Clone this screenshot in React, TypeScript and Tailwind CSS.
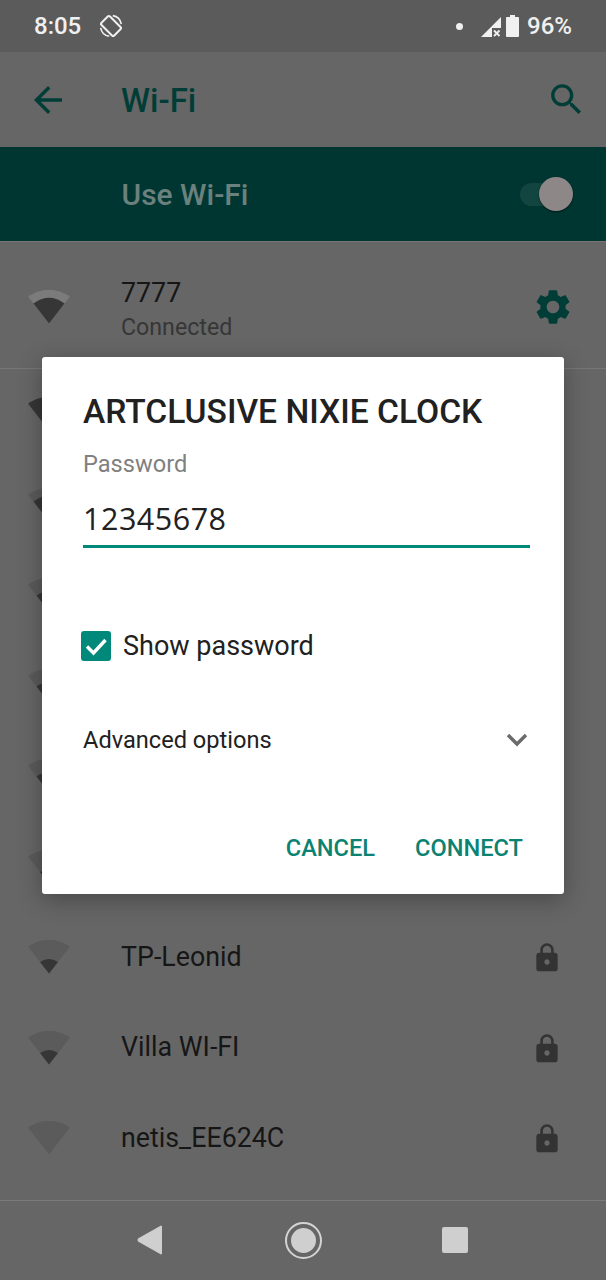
const LOCK =
  'M18 8h-1V6c0-2.76-2.24-5-5-5S7 3.24 7 6v2H6c-1.1 0-2 .9-2 2v10c0 1.1.9 2 2 2h12c1.1 0 2-.9 2-2V10c0-1.1-.9-2-2-2zm-6 9c-1.1 0-2-.9-2-2s.9-2 2-2 2 .9 2 2-.9 2-2 2zm3.1-9H8.9V6c0-1.71 1.39-3.1 3.1-3.1 1.71 0 3.1 1.39 3.1 3.1v2z';
const GEAR =
  'M19.14 12.94c.04-.3.06-.61.06-.94 0-.32-.02-.64-.07-.94l2.03-1.58c.18-.14.23-.41.12-.61l-1.92-3.32c-.12-.22-.37-.29-.59-.22l-2.39.96c-.5-.38-1.03-.7-1.62-.94l-.36-2.54c-.04-.24-.24-.41-.48-.41h-3.84c-.24 0-.43.17-.47.41l-.36 2.54c-.59.24-1.13.57-1.62.94l-2.39-.96c-.22-.08-.47 0-.59.22L2.74 8.87c-.12.21-.08.47.12.61l2.03 1.58c-.05.3-.09.63-.09.94s.02.64.07.94l-2.03 1.58c-.18.14-.23.41-.12.61l1.92 3.32c.12.22.37.29.59.22l2.39-.96c.5.38 1.03.7 1.62.94l.36 2.54c.05.24.24.41.48.41h3.84c.24 0 .44-.17.47-.41l.36-2.54c.59-.24 1.13-.56 1.62-.94l2.39.96c.22.08.47 0 .59-.22l1.92-3.32c.12-.22.07-.47-.12-.61l-2.01-1.58zM12 15.6c-1.98 0-3.6-1.62-3.6-3.6s1.62-3.6 3.6-3.6 3.6 1.62 3.6 3.6-1.62 3.6-3.6 3.6z';

const FAN = 'M1 5.8Q21 -6.5 41 5.8Q42 6.5 41.2 7.6L21 33.5L.8 7.6Q0 6.5 1 5.8Z';
const FAN_LEVELS: Record<number, string> = {
  1: 'M12 22Q21 16 30 22L21 33.5Z',
  2: 'M8.5 17.4Q21 9 33.5 17.4L21 33.5Z',
  3: 'M5.5 13.5Q21 2 36.5 13.5L21 33.5Z',
  4: FAN,
};

// level 0-4, the dark part of the fan grows from the tip
function WifiIcon({ level, connected }: { level: number; connected?: boolean }) {
  return (
    <svg width="42" height="34" viewBox="0 0 42 34" className="shrink-0">
      <path d={FAN} fill={connected ? '#7b7b7b' : '#5b5b5b'} />
      {FAN_LEVELS[level] && <path d={FAN_LEVELS[level]} fill="#363636" />}
    </svg>
  );
}

function NetworkRow({ name, level }: { name?: string; level: number }) {
  return (
    <div className="flex h-[90.5px] items-center pl-[28px] pr-[43px]">
      <WifiIcon level={level} />
      <span className="ml-[51px] flex-1 text-[26.8px] leading-none text-[#161616]">{name}</span>
      <svg width="32" height="32" viewBox="0 0 24 24" fill="#333333" className="mt-[2px]">
        <path d={LOCK} />
      </svg>
    </div>
  );
}

// these rows sit behind the dialog, only the icon edge shows
const hiddenLevels = [4, 3, 2, 2, 2, 1];

export default function App() {
  return (
    <div className="relative flex h-[1280px] w-[606px] flex-col overflow-hidden bg-[#666666] font-['Roboto',sans-serif]">
      {/* Status bar */}
      <div className="flex h-[52px] items-center bg-[#5b5b5b] pl-[34px] pr-[34px] text-[#f0f0f0]">
        <span className="text-[24px] font-medium leading-none">8:05</span>
        <svg width="24" height="24" viewBox="0 0 24 24" className="ml-[18px]" fill="none" stroke="#f0f0f0">
          <rect x="6" y="3" width="12" height="18" rx="1.6" strokeWidth="2" transform="rotate(-45 12 12)" />
          <path d="M13.8 1.66A10.5 10.5 0 0 1 22.3 10.2M10.2 22.3A10.5 10.5 0 0 1 1.66 13.8" strokeWidth="1.6" />
        </svg>
        <div className="flex-1" />
        <div className="h-[7px] w-[7px] rounded-full bg-[#f0f0f0]" />
        <svg width="20" height="20" viewBox="0 0 20 20" className="ml-[18px] mt-[1px]">
          <path d="M20 0V11H11V20H0Z" fill="#f0f0f0" />
          <path d="M13 13.5L18.5 19M18.5 13.5L13 19" stroke="#f0f0f0" strokeWidth="1.8" />
        </svg>
        <svg width="13" height="22" viewBox="0 0 13 22" className="ml-[5px]" fill="#f0f0f0">
          <path d="M4 0H9V2H12A1 1 0 0 1 13 3V21A1 1 0 0 1 12 22H1A1 1 0 0 1 0 21V3A1 1 0 0 1 1 2H4Z" />
        </svg>
        <span className="ml-[8px] text-[24px] font-medium leading-none">96%</span>
      </div>

      {/* App bar */}
      <div className="flex h-[95px] items-center pl-[27px] pr-[19px]">
        <svg width="42" height="42" viewBox="0 0 24 24" fill="#003d37">
          <path d="M20 11H7.83l5.59-5.59L12 4l-8 8 8 8 1.41-1.41L7.83 13H20v-2z" />
        </svg>
        <span className="ml-[52px] mt-[2px] flex-1 text-[33px] font-medium leading-none text-[#003d37]">Wi-Fi</span>
        <svg width="41" height="41" viewBox="0 0 24 24" fill="#003d37">
          <path d="M15.5 14h-.79l-.28-.27C15.41 12.59 16 11.11 16 9.5 16 5.91 13.09 3 9.5 3S3 5.91 3 9.5 5.91 16 9.5 16c1.61 0 3.09-.59 4.23-1.57l.27.28v.79l5 4.99L20.49 19l-4.99-5zm-6 0C7.01 14 5 11.99 5 9.5S7.01 5 9.5 5 14 7.01 14 9.5 11.99 14 9.5 14z" />
        </svg>
      </div>

      {/* Use Wi-Fi */}
      <div className="flex h-[94px] items-center bg-[#003631] pl-[121.5px] pr-[33px]">
        <span className="mt-[2px] flex-1 text-[30px] font-medium leading-none text-[#6a817d]">Use Wi-Fi</span>
        <div className="relative h-[23px] w-[53px] rounded-full bg-[#124540]">
          <div className="absolute right-0 top-[-5.5px] h-[34px] w-[34px] rounded-full bg-[#8d8887] shadow-[0_1px_2px_rgba(0,0,0,0.5)]" />
        </div>
      </div>

      {/* Networks */}
      <div className="flex-1 border-t border-[#767676]">
        <div className="flex h-[127px] items-center border-b border-[#767676] pl-[28px] pr-[32px] pt-[3px]">
          <WifiIcon level={3} connected />
          <div className="ml-[51px] mt-[7px] flex-1">
            <div className="text-[26.8px] leading-[34px] text-[#161616]">7777</div>
            <div className="text-[23.2px] leading-[34px] text-[#363636]">Connected</div>
          </div>
          <svg width="42" height="42" viewBox="0 0 24 24" fill="#003d37">
            <path d={GEAR} />
          </svg>
        </div>
        {hiddenLevels.map((level, i) => (
          <NetworkRow key={i} level={level} />
        ))}
        <NetworkRow name="TP-Leonid" level={1} />
        <NetworkRow name="Villa WI-FI" level={1} />
        <NetworkRow name="netis_EE624C" level={0} />
      </div>

      {/* Nav bar */}
      <div className="flex h-[80px] items-center border-t border-[#7a7a7a] bg-[#666666] pb-[1px]">
        <svg width="25" height="30" viewBox="0 0 25 30" fill="#cfcfcf" className="ml-[137px]">
          <path d="M24 .5Q25 .5 25 2V28Q25 29.5 24 29.5L1 16.5Q0 15 1 13.5Z" />
        </svg>
        <div className="ml-[123px] flex h-[37px] w-[37px] items-center justify-center rounded-full border-2 border-[#d4d4d4]">
          <div className="h-[25px] w-[25px] rounded-full bg-[#cfcfcf]" />
        </div>
        <div className="ml-[120px] h-[26px] w-[26px] rounded-[2px] bg-[#cfcfcf]" />
      </div>

      {/* Dialog */}
      <div className="absolute left-[42px] top-[357px] h-[537px] w-[522px] rounded-[3px] bg-white pl-[41px] pr-[34px] shadow-[0_6px_24px_rgba(0,0,0,0.3)]">
        <div className="mt-[36px] text-[33.6px] font-medium leading-[38px] text-[#212121]">ARTCLUSIVE NIXIE CLOCK</div>
        <div className="mt-[19px] text-[23.6px] leading-[28px] text-[#808080]">Password</div>
        <div className="mt-[22px] h-[48px] border-b-[3px] border-[#00897b] font-['Open_Sans',sans-serif] text-[30.5px] leading-[36px] tracking-[0.5px] text-[#212121]">
          12345678
        </div>
        <div className="mt-[83px] flex items-center">
          <div className="-ml-[2px] flex h-[30px] w-[30px] items-center justify-center rounded-[3px] bg-[#00897b]">
            <svg width="24" height="24" viewBox="0 0 24 24" fill="none" stroke="white" strokeWidth="3.4">
              <path d="M3 12.5L9.5 19L21.5 6" />
            </svg>
          </div>
          <span className="ml-[12px] text-[27px] leading-none text-[#212121]">Show password</span>
        </div>
        <div className="mt-[68px] flex items-center justify-between">
          <span className="text-[23.6px] leading-none text-[#212121]">Advanced options</span>
          <svg width="22" height="14" viewBox="0 0 22 14" className="mr-[2px] -mt-[1px]" fill="none" stroke="#6b6b6b" strokeWidth="3.4">
            <path d="M2 2L11 11L20 2" />
          </svg>
        </div>
        <div className="mt-[84px] flex justify-end gap-[40px] pr-[7px] text-[23.6px] font-medium leading-none text-[#0b8272]">
          <span>CANCEL</span>
          <span>CONNECT</span>
        </div>
      </div>
    </div>
  );
}
